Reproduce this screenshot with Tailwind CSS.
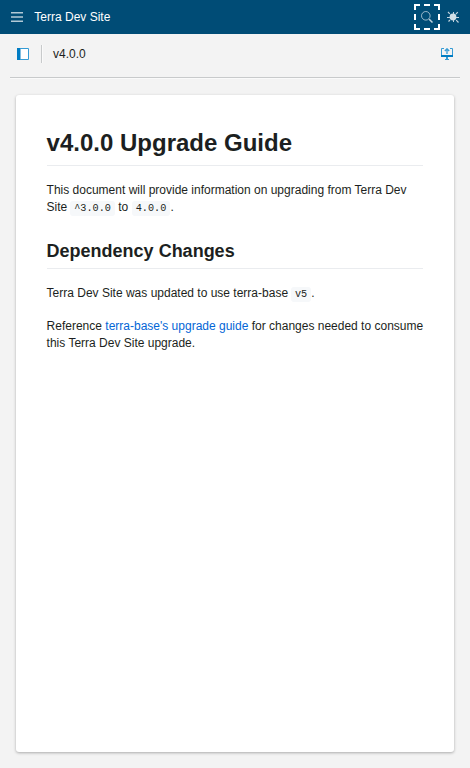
<!DOCTYPE html>
<html lang="en">
<head>
<meta charset="utf-8">
<title>Terra Dev Site</title>
<script src="https://cdn.jsdelivr.net/npm/@tailwindcss/browser@4"></script>
</head>
<body class="flex h-screen flex-col overflow-hidden bg-[#f3f3f3] font-['Liberation_Sans',Arial,sans-serif] text-[12px] leading-[17px] text-[#1c1f21]">
<header class="flex h-[34px] shrink-0 items-center bg-[#004c76] pr-1 pl-[11px] text-white">
  <button class="block" aria-label="Menu">
    <svg class="block size-3" viewBox="0 0 12 12" fill="#b2c9d6"><path d="M0 1h12v1.500H0zM0 5.250h12v1.500H0zM0 9.500h12V11H0z"/></svg>
  </button>
  <span class="ml-[11.3px] grow pt-px">Terra Dev Site</span>
  <button class="flex size-[26px] items-center justify-center border-2 border-dashed border-white" aria-label="Search">
    <svg class="block size-3" viewBox="0 0 12 12" fill="none" stroke="#c1d3de"><circle cx="4.800" cy="4.800" r="4.300" stroke-width=".8"/><path stroke-width="1.500" d="m8.200 8.200 3.300 3.300"/></svg>
  </button>
  <button class="flex size-[26px] items-center justify-center" aria-label="Settings">
    <svg class="block size-3" viewBox="0 0 12 12" fill="#d0dfe7" stroke="#c1d3de"><circle cx="6" cy="6" r="3.400" stroke="none"/><path fill="none" stroke-width="1" d="M6.500 1v2M6.500 9v2M0 6.500h3M9 6.500h3"/><path fill="none" stroke-width="1.200" d="m1 1 1.800 1.800M9.200 9.200l2.300 2.300M10.800 1.200 9 3M1.500 10.500 3 9"/></svg>
  </button>
</header>
<div class="mx-[10px] flex h-[44px] shrink-0 items-center border-b border-[#c8cacb] px-[7px] pb-[3px] shadow-[0_1px_0_#fafafa]">
  <svg class="block size-3" viewBox="0 0 12 12"><path fill="#fff" d="M0 0h12v12H0z"/><path fill="none" stroke="#359bd4" d="M.5.5h11v11H.5z"/><path fill="#007cc3" d="M0 0h3v12H0z"/><path fill="#7fbde1" d="M3 1h1v10H3z"/></svg>
  <span class="ml-3 h-[18px] w-px bg-[#c8cacb] shadow-[1px_0_0_#fafafa]"></span>
  <span class="ml-[11px] grow pt-px">v4.0.0</span>
  <svg class="block size-3" viewBox="0 0 12 12" fill="none" stroke="#359bd4"><path d="M3 .5H.5V7M9 .5h2.500V7"/><path stroke-width="1.300" d="M6 6V.7M3.800 3 6 .8 8.200 3"/><path fill="#007cc3" stroke="none" d="M0 7h12v2H0z"/><path stroke="none" fill="#359bd4" d="M5 9h2v2H5zM4 11h4v1H4z"/></svg>
</div>
<main class="mx-4 mt-[17px] mb-4 grow rounded-[3px] bg-white px-[30.600px] pt-[32.600px] shadow-[0_1px_3px_rgba(0,0,0,0.300)]">
  <h1 class="mb-4 border-b border-[#eaecef] pb-[7.200px] text-[24px] leading-[30px] font-bold">v4.0.0 Upgrade Guide</h1>
  <p class="mb-6">This document will provide information on upgrading from Terra Dev Site <code class="-ml-[0.5px] rounded-[3px] bg-[#f6f8fa] px-[4.080px] py-[2.040px] font-['Liberation_Mono',monospace] text-[10.200px] leading-none">^3.0.0</code> to <code class="rounded-[3px] bg-[#f6f8fa] px-[4.080px] py-[2.040px] font-['Liberation_Mono',monospace] text-[10.200px] leading-none">4.0.0</code>.</p>
  <h2 class="mb-4 border-b border-[#eaecef] pb-[5.400px] text-[18px] leading-[22.500px] font-bold">Dependency Changes</h2>
  <p class="mb-4">Terra Dev Site was updated to use terra-base <code class="-ml-[0.5px] rounded-[3px] bg-[#f6f8fa] px-[4.080px] py-[2.040px] font-['Liberation_Mono',monospace] text-[10.200px] leading-none">v5</code>.</p>
  <p>Reference <a class="text-[#0366d6]" href="#">terra-base's upgrade guide</a> for changes needed to consume this Terra Dev Site upgrade.</p>
</main>
</body>
</html>
